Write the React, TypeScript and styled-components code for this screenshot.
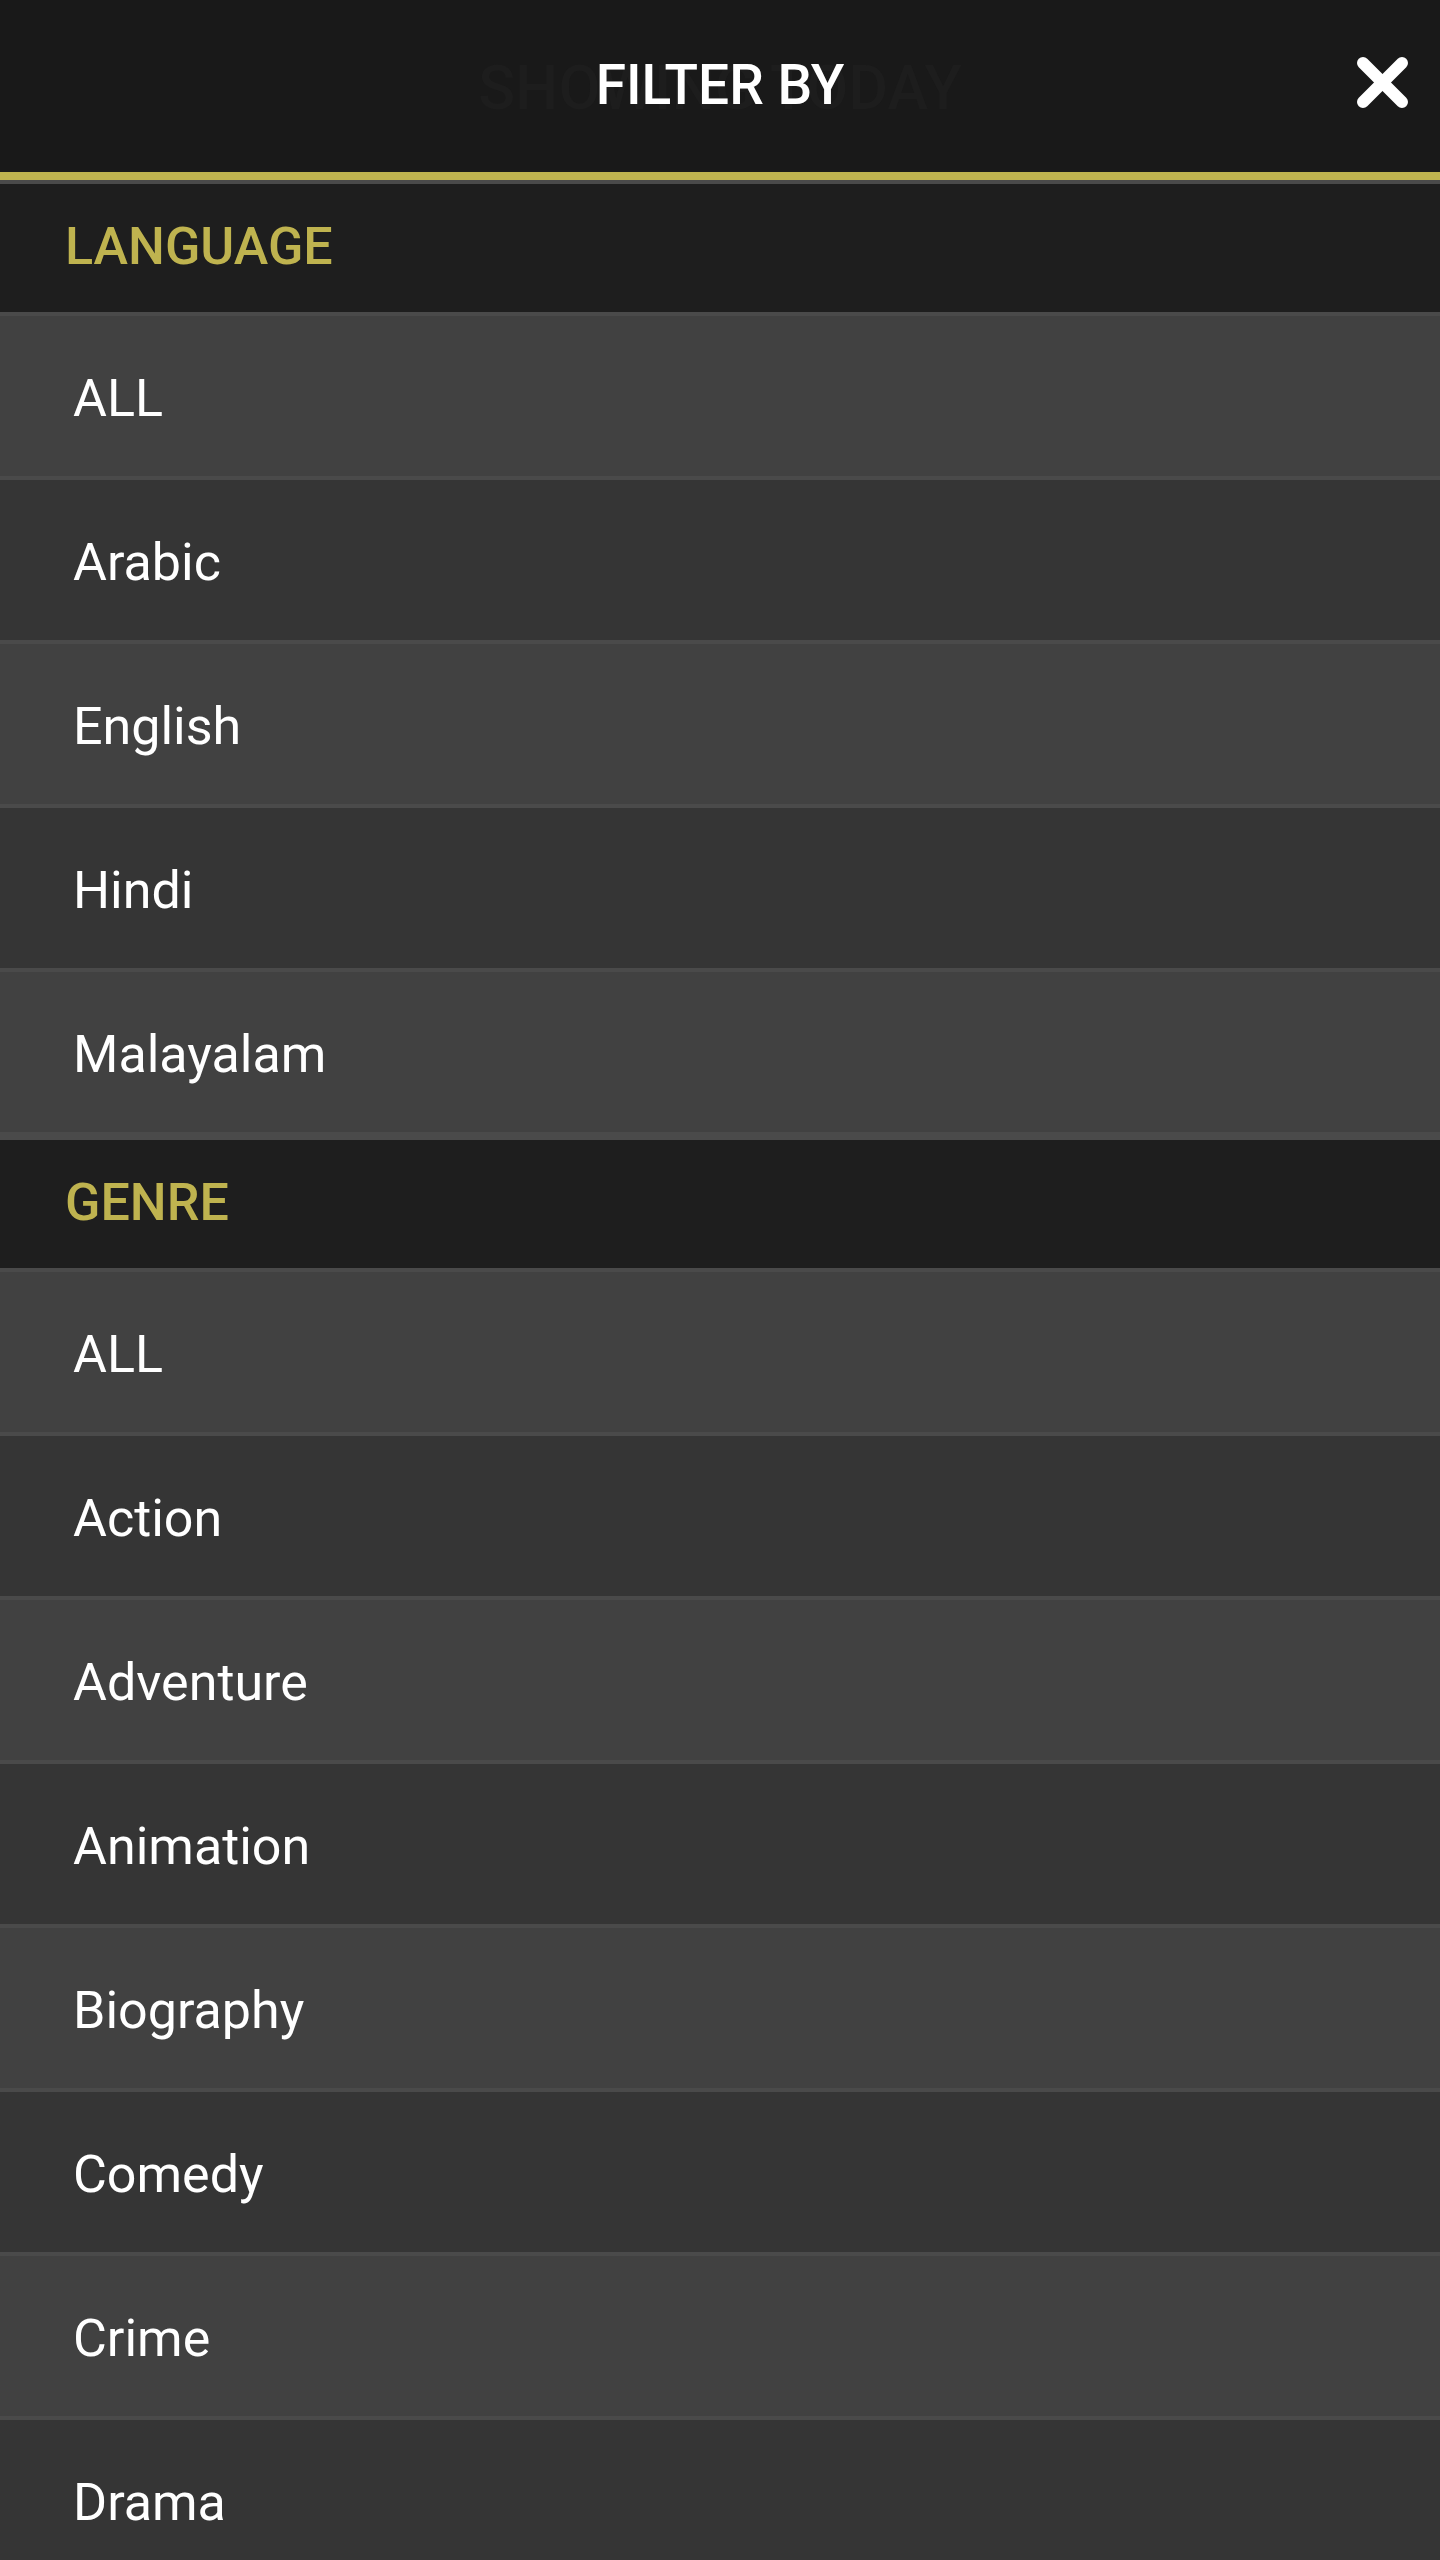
import React from "react";
import styled, { createGlobalStyle } from "styled-components";

const GlobalStyle = createGlobalStyle`
  html, body {
    margin: 0;
    padding: 0;
    background: #191919;
  }
  * { box-sizing: border-box; }
`;

const Screen = styled.div`
  width: 1440px;
  height: 2560px;
  display: flex;
  flex-direction: column;
  background: #191919;
  font-family: Roboto, "Noto Sans", "Liberation Sans", sans-serif;
  overflow: hidden;
`;

const Header = styled.header`
  position: relative;
  flex: 0 0 auto;
  height: 180px;
  display: flex;
  align-items: center;
  justify-content: center;
  background: #191919;
  border-bottom: 8px solid #bfb34f;
`;

const GhostTitle = styled.span`
  position: absolute;
  left: 0;
  right: 0;
  top: 52px;
  text-align: center;
  font-size: 61px;
  font-weight: 500;
  color: #1d1d1d;
  letter-spacing: 0;
  pointer-events: none;
`;

const Title = styled.h1`
  position: relative;
  margin: 0 0 2px;
  font-size: 55px;
  font-weight: 500;
  color: #ffffff;
  letter-spacing: 0;
`;

const CloseButton = styled.button`
  position: absolute;
  right: 32px;
  top: 57px;
  width: 51px;
  height: 51px;
  padding: 0;
  border: none;
  background: transparent;
  cursor: pointer;
  display: flex;
`;

const List = styled.div`
  flex: 1 1 auto;
  overflow-y: auto;
  scrollbar-width: none;
  &::-webkit-scrollbar { display: none; }
`;

const Section = styled.section`
  display: flex;
  flex-direction: column;
`;

const SectionHeader = styled.h2`
  margin: 0;
  height: 136px;
  display: flex;
  align-items: center;
  padding: 0 0 4px 65px;
  background: #1e1e1e;
  border-top: 4px solid #4a4a4a;
  border-bottom: 4px solid #4a4a4a;
  font-size: 52px;
  font-weight: 500;
  color: #bfb34f;
  text-transform: uppercase;
`;

const Row = styled.button<{ $shade: "light" | "dark" }>`
  height: 164px;
  width: 100%;
  display: flex;
  align-items: center;
  padding: 4px 0 0 73px;
  border: none;
  border-bottom: 4px solid #4a4a4a;
  background: ${(p) => (p.$shade === "light" ? "#414141" : "#353535")};
  font-family: inherit;
  font-size: 52px;
  font-weight: 400;
  color: #ffffff;
  text-align: left;
  cursor: pointer;
`;

const sections = [
  {
    title: "Language",
    items: ["ALL", "Arabic", "English", "Hindi", "Malayalam"],
  },
  {
    title: "Genre",
    items: [
      "ALL",
      "Action",
      "Adventure",
      "Animation",
      "Biography",
      "Comedy",
      "Crime",
      "Drama",
      "Family",
      "Fantasy",
      "Horror",
      "Thriller",
    ],
  },
];

const CloseIcon = () => (
  <svg width="51" height="51" viewBox="0 0 51 51" aria-hidden="true">
    <line x1="6" y1="6" x2="45" y2="45" stroke="#ffffff" strokeWidth="12" strokeLinecap="round" />
    <line x1="45" y1="6" x2="6" y2="45" stroke="#ffffff" strokeWidth="12" strokeLinecap="round" />
  </svg>
);

export default function App() {
  return (
    <>
      <GlobalStyle />
      <Screen>
        <Header>
          <GhostTitle>SHOWING TODAY</GhostTitle>
          <Title>FILTER BY</Title>
          <CloseButton aria-label="Close">
            <CloseIcon />
          </CloseButton>
        </Header>
        <List>
          {sections.map((s) => (
            <Section key={s.title}>
              <SectionHeader>{s.title}</SectionHeader>
              {s.items.map((item, i) => (
                <Row key={item} $shade={i % 2 === 0 ? "light" : "dark"}>
                  {item}
                </Row>
              ))}
            </Section>
          ))}
        </List>
      </Screen>
    </>
  );
}
